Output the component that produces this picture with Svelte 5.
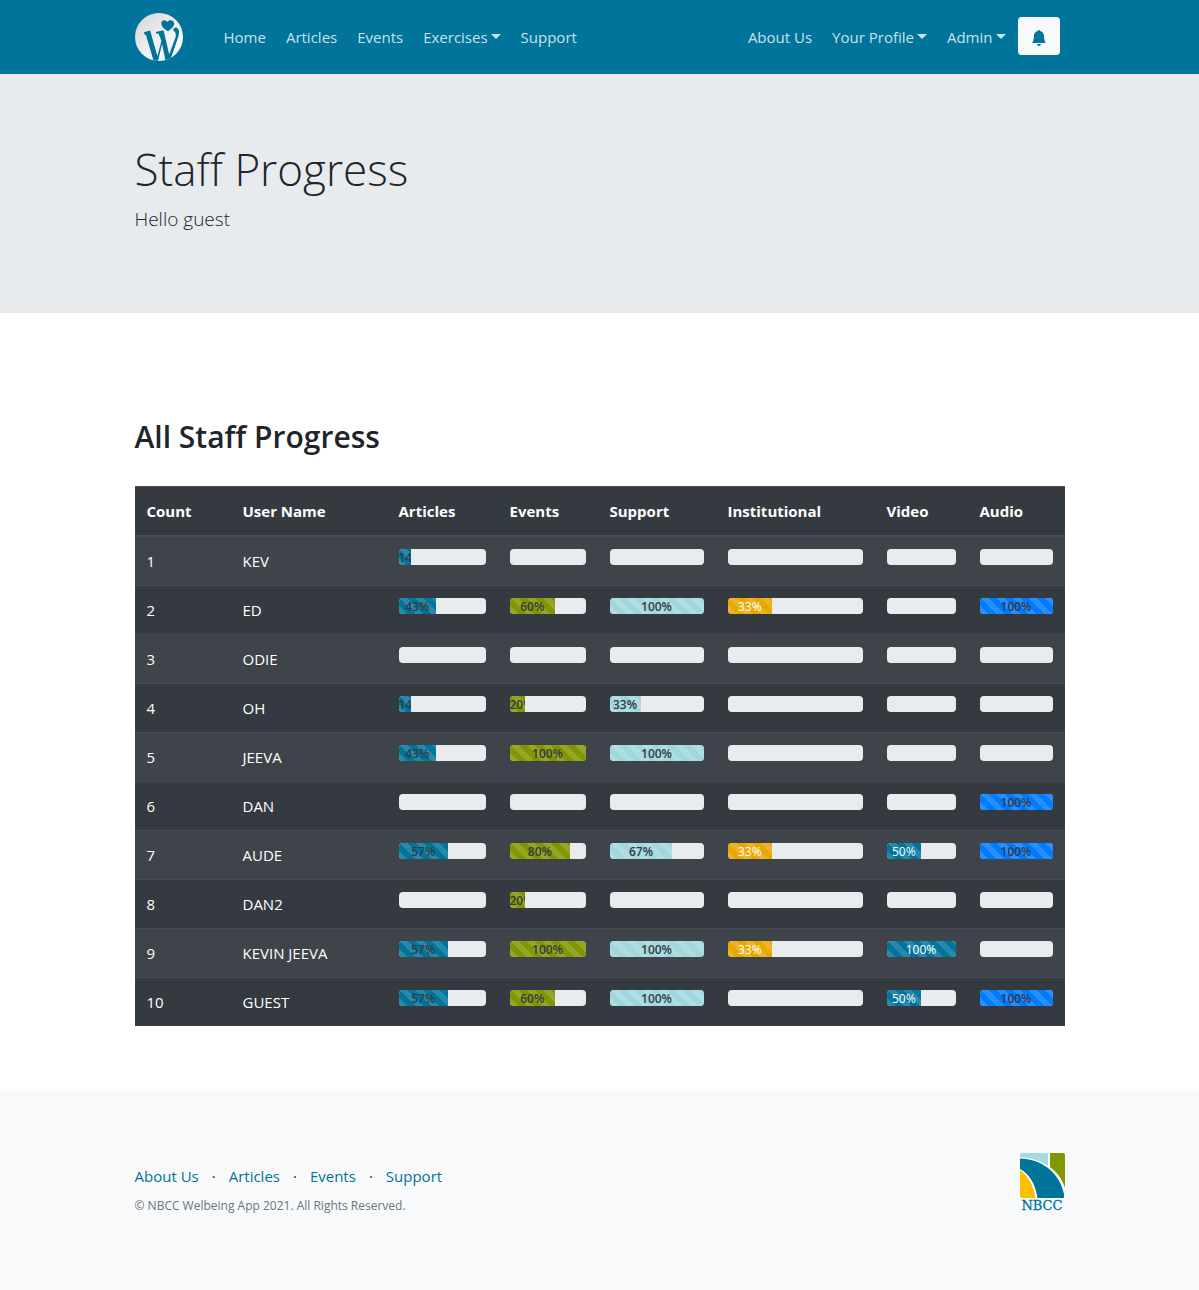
<script>
  const mainLinks = [
    { label: 'Home' },
    { label: 'Articles' },
    { label: 'Events' },
    { label: 'Exercises', menu: true },
    { label: 'Support' }
  ];
  const userLinks = [
    { label: 'About Us' },
    { label: 'Your Profile', menu: true },
    { label: 'Admin', menu: true }
  ];
  const footerLinks = ['About Us', 'Articles', 'Events', 'Support'];

  const columns = [
    { name: 'Articles', kind: 'articles' },
    { name: 'Events', kind: 'events' },
    { name: 'Support', kind: 'support' },
    { name: 'Institutional', kind: 'institutional' },
    { name: 'Video', kind: 'video' },
    { name: 'Audio', kind: 'audio' }
  ];

  const staff = [
    { name: 'KEV', progress: [14, 0, 0, 0, 0, 0] },
    { name: 'ED', progress: [43, 60, 100, 33, 0, 100] },
    { name: 'ODIE', progress: [0, 0, 0, 0, 0, 0] },
    { name: 'OH', progress: [14, 20, 33, 0, 0, 0] },
    { name: 'JEEVA', progress: [43, 100, 100, 0, 0, 0] },
    { name: 'DAN', progress: [0, 0, 0, 0, 0, 100] },
    { name: 'AUDE', progress: [57, 80, 67, 33, 50, 100] },
    { name: 'DAN2', progress: [0, 20, 0, 0, 0, 0] },
    { name: 'KEVIN JEEVA', progress: [57, 100, 100, 33, 100, 0] },
    { name: 'GUEST', progress: [57, 60, 100, 0, 50, 100] }
  ];
</script>

{#snippet navLinks(links)}
  <ul class="nav-list">
    {#each links as link}
      <li><a href="#top" class:has-menu={link.menu}>{link.label}</a></li>
    {/each}
  </ul>
{/snippet}

<header class="navbar">
  <nav class="container bar" aria-label="Main">
    <a class="brand" href="#top" aria-label="Wellbeing home">
      <svg viewBox="0 0 48 48" width="48" height="48" aria-hidden="true">
        <defs>
          <linearGradient id="disc" x1="0" y1="0" x2="1" y2="1">
            <stop offset="0" stop-color="#d2d2d4" />
            <stop offset="0.5" stop-color="#efeff0" />
            <stop offset="1" stop-color="#ffffff" />
          </linearGradient>
          <clipPath id="round"><circle cx="24" cy="24" r="24" /></clipPath>
        </defs>
        <circle cx="24" cy="24" r="24" fill="url(#disc)" />
        <g fill="#00749a" clip-path="url(#round)">
          <path d="M9 19.200 15.200 17.400 15.800 20 22.400 43 26.400 28 23.600 20.800 21.200 20.600 20.800 19 28.400 17.200 29.200 20 34.200 41.500 40.600 24C41.400 21 40.400 18.800 38 17 38.600 14.800 41.200 13.400 42.800 15.400 44.800 18 44 21.500 43 24.500L35 48H30.600L27 31 23 48H18.600L11 22 9.400 21.600Z" />
          <path d="M33.200 18.200C30 16.600 26.300 14.300 26.300 10.600 26.300 7.200 30.400 6.200 32.100 9 34.200 6 39.200 6.800 39.200 10.600 39.200 14 36 16.200 33.200 18.200Z" />
        </g>
      </svg>
    </a>
    {@render navLinks(mainLinks)}
    <div class="right">
      {@render navLinks(userLinks)}
      <button class="bell" type="button" aria-label="Notifications">
        <svg viewBox="0 0 16 16" width="16" height="16" fill="#00749a" aria-hidden="true">
          <path d="M8 16a2 2 0 0 0 2-2H6a2 2 0 0 0 2 2zm.995-14.901a1 1 0 1 0-1.99 0A5.002 5.002 0 0 0 3 6c0 1.098-.5 6-2 7h14c-1.500-1-2-5.902-2-7 0-2.420-1.720-4.440-4.005-4.901z" />
        </svg>
      </button>
    </div>
  </nav>
</header>

<section class="hero">
  <div class="container">
    <h1>Staff Progress</h1>
    <p>Hello guest</p>
  </div>
</section>

<main class="container">
  <h2>All Staff Progress</h2>
  <table>
    <colgroup>
      <col class="c-count" /><col class="c-user" />
      {#each columns as column}<col class="c-{column.kind}" />{/each}
    </colgroup>
    <thead>
      <tr>
        <th scope="col">Count</th>
        <th scope="col">User Name</th>
        {#each columns as column}<th scope="col">{column.name}</th>{/each}
      </tr>
    </thead>
    <tbody>
      {#each staff as person, i}
        <tr>
          <td>{i + 1}</td>
          <td>{person.name}</td>
          {#each person.progress as value, c}
            <td>
              <div
                class="track"
                role="progressbar"
                aria-label="{person.name} {columns[c].name}"
                aria-valuenow={value}
                aria-valuemin="0"
                aria-valuemax="100"
              >
                {#if value}
                  <div class="fill {columns[c].kind}" style="width: {value}%">{value}%</div>
                {/if}
              </div>
            </td>
          {/each}
        </tr>
      {/each}
    </tbody>
  </table>
</main>

<footer>
  <div class="container foot">
    <div>
      <ul class="foot-links">
        {#each footerLinks as label, i}
          {#if i > 0}<li aria-hidden="true">·</li>{/if}
          <li><a href="#top">{label}</a></li>
        {/each}
      </ul>
      <p>© NBCC Welbeing App 2021. All Rights Reserved.</p>
    </div>
    <svg viewBox="0 0 45 58" width="45" height="58" role="img" aria-label="NBCC">
      <defs><clipPath id="tile"><rect width="45" height="45" rx="2" /></clipPath></defs>
      <g clip-path="url(#tile)">
        <rect width="45" height="45" fill="#ffffff" />
        <path d="M0 0H28V12.500C20 7.500 10 4.500 0 4.200Z" fill="#a5dbdf" />
        <path d="M30 0H45V35C42 26 37 19 30 14Z" fill="#829600" />
        <path d="M0 5.500C25 6.500 40 22 44 41V45H17.500C15.500 31 9 20.500 0 16Z" fill="#00749a" />
        <path d="M0 17.500C8 22.500 13.500 32 15.500 45H0Z" fill="#f9c000" />
      </g>
      <text x="22" y="57" text-anchor="middle" class="logo-text">NBCC</text>
    </svg>
  </div>
</footer>

<style>
  :global(body) {
    background: #fff;
    color: #212529;
    font: 15px/24px 'Segoe UI', 'Open Sans', 'Noto Sans', sans-serif;
  }
  .container {
    box-sizing: border-box;
    width: 100%;
    max-width: 960px;
    margin: 0 auto;
    padding: 0 15px;
  }
  a {
    text-decoration: none;
  }
  ul {
    display: flex;
    list-style: none;
    margin: 0;
    padding: 0;
  }
  .navbar {
    background: #00749a;
  }
  .bar {
    display: flex;
    align-items: center;
    min-height: 74px;
  }
  .brand {
    display: flex;
    margin-right: 41px;
  }
  .nav-list {
    gap: 20px;
  }
  .nav-list a {
    display: flex;
    align-items: center;
    color: rgba(255, 255, 255, 0.8);
  }
  .has-menu::after {
    content: '';
    margin: 0 0 2px 3px;
    border: 5px solid transparent;
    border-top-color: currentColor;
    border-bottom: 0;
  }
  .right {
    display: flex;
    align-items: center;
    gap: 12px;
    margin: 0 5px 0 auto;
  }
  .bell {
    display: flex;
    align-items: center;
    justify-content: center;
    width: 42px;
    height: 38px;
    margin-bottom: 2px;
    padding: 4px 0 0;
    border: 0;
    border-radius: 4px;
    background: #f8f9fa;
  }
  .hero {
    padding: 65px 0 78px;
    background: #e7ebee;
  }
  h1 {
    margin: 0 0 5px;
    font-size: 44px;
    font-weight: 300;
    line-height: 60px;
  }
  .hero p {
    margin: 0;
    padding-bottom: 1px;
    font-size: 19px;
    font-weight: 300;
    line-height: 30px;
  }
  h2 {
    margin: 105px 0 30px;
    font-size: 30px;
    font-weight: 600;
    line-height: 38px;
  }
  table {
    width: 100%;
    table-layout: fixed;
    border-collapse: collapse;
    background: #343a40;
    color: #fff;
  }
  .c-count { width: 96px; }
  .c-user { width: 156px; }
  .c-articles { width: 111px; }
  .c-events { width: 100px; }
  .c-support { width: 118px; }
  .c-institutional { width: 159px; }
  .c-video { width: 93px; }
  .c-audio { width: 97px; }
  th,
  td {
    padding: 12px;
    border-top: 1px solid #454d55;
    text-align: left;
    vertical-align: top;
  }
  th {
    border-bottom: 2px solid #454d55;
    font-weight: 700;
  }
  tbody tr:nth-child(odd) {
    background: rgba(255, 255, 255, 0.05);
  }
  .track {
    display: flex;
    height: 16px;
    overflow: hidden;
    border-radius: 4px;
    background: #e9ecef;
    font-size: 12px;
    line-height: 18px;
  }
  .fill {
    display: flex;
    flex-direction: column;
    overflow: hidden;
    background-image: linear-gradient(
      45deg,
      rgba(255, 255, 255, 0.15) 25%,
      transparent 25%,
      transparent 50%,
      rgba(255, 255, 255, 0.15) 50%,
      rgba(255, 255, 255, 0.15) 75%,
      transparent 75%
    );
    background-size: 16px 16px;
    color: #343a40;
    font-weight: 600;
    text-align: center;
    white-space: nowrap;
  }
  .articles { background-color: #00749a; }
  .events { background-color: #829600; }
  .support { background-color: #a0d7de; }
  .institutional { background-color: #e9a800; }
  .video { background-color: #00749a; }
  .audio { background-color: #007bff; }
  .institutional,
  .video {
    color: #fff;
    font-weight: 400;
  }
  footer {
    margin-top: 63px;
    padding: 64px 0 79px;
    background: #f8f9fa;
  }
  .foot {
    display: flex;
    justify-content: space-between;
  }
  .foot-links {
    gap: 13px;
    margin-top: 11px;
  }
  .foot-links a {
    color: #00749a;
  }
  .foot p {
    margin: 8px 0 0;
    color: #6c757d;
    font-size: 12px;
    line-height: 20px;
  }
  .logo-text {
    fill: #00749a;
    stroke: #00749a;
    stroke-width: 0.3px;
    font: 13px 'DejaVu Serif', serif;
  }
</style>
